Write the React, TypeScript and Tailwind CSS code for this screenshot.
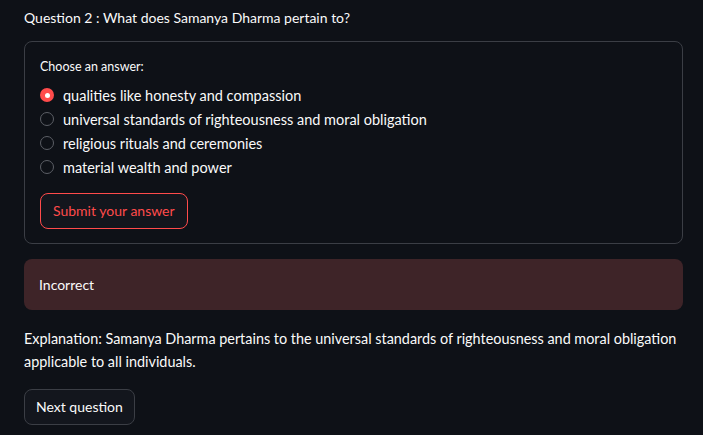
import { useState } from "react";

const options = [
  "qualities like honesty and compassion",
  "universal standards of righteousness and moral obligation",
  "religious rituals and ceremonies",
  "material wealth and power",
];

const App = () => {
  const [picked, setPicked] = useState(0);
  return (
    <div className="min-h-[435px] w-full bg-[#0e1117] pl-6 pr-5 pt-[6px] text-[#fafafa] font-['Lato','Open_Sans',sans-serif] text-[14px] leading-[1.6]">
      {/* QUESTION */}
      <p className="py-[1px]">Question 2 : What does Samanya Dharma pertain to?</p>

      {/* FORM */}
      <div className="mt-[11px] rounded-lg border border-[#3b3e45] px-[15px] pt-[15px] pb-[14px]">
        <div className="text-[12.5px] leading-[20px]">Choose an answer:</div>
        <div className="mt-[6px] flex flex-col text-[14.5px]">
          {options.map((o, i) => (
            <label key={o} className="flex h-6 items-center gap-[9px] cursor-pointer" onClick={() => setPicked(i)}>
              {picked === i ? (
                <span className="flex h-[14px] w-[14px] items-center justify-center rounded-full bg-[#ff4b4b]">
                  <span className="h-[5px] w-[5px] rounded-full bg-white" />
                </span>
              ) : (
                <span className="h-[14px] w-[14px] rounded-full border border-[#5c5f66]" />
              )}
              <span>{o}</span>
            </label>
          ))}
        </div>
        <button className="mt-[14px] h-9 rounded-lg border border-[#ff4b4b] bg-[#13161d] px-3 text-[#ff4b4b]">
          Submit your answer
        </button>
      </div>

      {/* RESULT */}
      <div className="mt-[15px] flex h-[51px] items-center rounded-lg bg-[#3e2428] px-[15px]">Incorrect</div>

      {/* EXPLANATION */}
      <p className="mt-[17px] text-[14.4px] leading-[23px]">
        Explanation: Samanya Dharma pertains to the universal standards of righteousness and moral obligation
        applicable to all individuals.
      </p>

      <button className="mt-[16px] h-9 rounded-lg border border-[#3b3e45] bg-[#13161d] px-[11px]">Next question</button>
    </div>
  );
};

export default App;
